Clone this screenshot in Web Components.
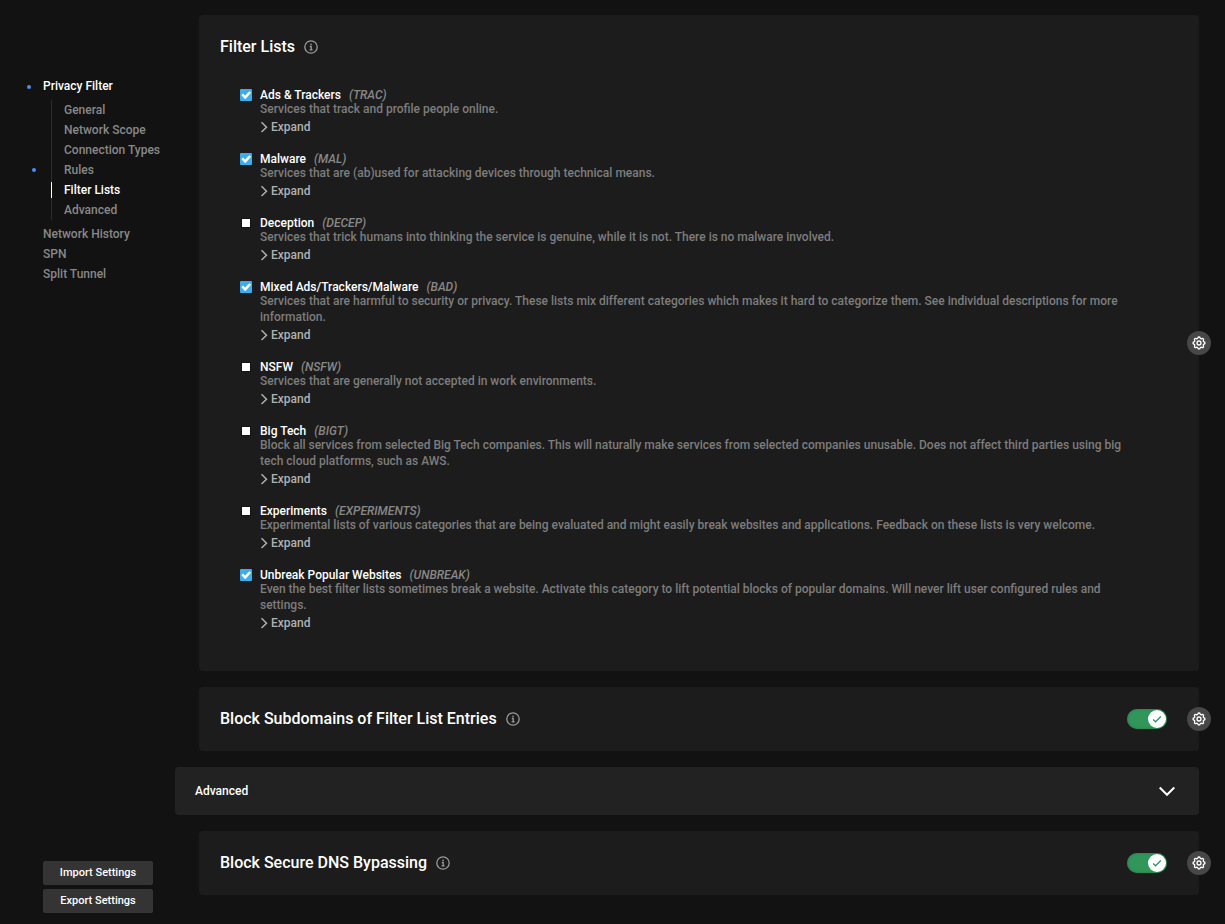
<!DOCTYPE html>
<html lang="en">
<head>
<meta charset="utf-8">
<title>Settings</title>
<style>
  html { background: #121212; }
  body { margin: 0; background: #121212; color: #fff; font: 500 12px/16px Roboto, sans-serif; }
</style>
</head>
<body>
<settings-page>
  <settings-nav slot="nav"></settings-nav>
  <setting-card heading="Filter Lists">
    <filter-item name="Ads &amp; Trackers" code="TRAC" checked>Services that track and profile people online.</filter-item>
    <filter-item name="Malware" code="MAL" checked>Services that are (ab)used for attacking devices through technical means.</filter-item>
    <filter-item name="Deception" code="DECEP">Services that trick humans into thinking the service is genuine, while it is not. There is no malware involved.</filter-item>
    <filter-item name="Mixed Ads/Trackers/Malware" code="BAD" checked>Services that are harmful to security or privacy. These lists mix different categories which makes it hard to categorize them. See individual descriptions for more information.</filter-item>
    <filter-item name="NSFW" code="NSFW">Services that are generally not accepted in work environments.</filter-item>
    <filter-item name="Big Tech" code="BIGT">Block all services from selected Big Tech companies. This will naturally make services from selected companies unusable. Does not affect third parties using big tech cloud platforms, such as AWS.</filter-item>
    <filter-item name="Experiments" code="EXPERIMENTS">Experimental lists of various categories that are being evaluated and might easily break websites and applications. Feedback on these lists is very welcome.</filter-item>
    <filter-item name="Unbreak Popular Websites" code="UNBREAK" checked>Even the best filter lists sometimes break a website. Activate this category to lift potential blocks of popular domains. Will never lift user configured rules and settings.</filter-item>
  </setting-card>
  <setting-card heading="Block Subdomains of Filter List Entries" toggle></setting-card>
  <section-bar>Advanced</section-bar>
  <setting-card heading="Block Secure DNS Bypassing" toggle></setting-card>
</settings-page>

<script>
const escapeText = s => s.replace(/&/g, '&amp;').replace(/</g, '&lt;').replace(/"/g, '&quot;');

class SettingsPage extends HTMLElement {
  constructor() {
    super();
    this.attachShadow({ mode: 'open' }).innerHTML = `
      <style>
        :host { display: grid; grid-template-columns: 175px minmax(0, 1fr); min-height: 100vh; }
        main { display: flex; flex-direction: column; gap: 16px; padding: 15px 26px 29px 0; }
      </style>
      <slot name="nav"></slot>
      <main><slot></slot></main>`;
  }
}

class SettingsNav extends HTMLElement {
  constructor() {
    super();
    this.attachShadow({ mode: 'open' }).innerHTML = `
      <style>
        :host { display: flex; flex-direction: column; justify-content: space-between; box-sizing: border-box;
                position: sticky; top: 0; height: 100vh; padding: 76px 0 11px 43px; }
        ul { list-style: none; margin: 0; padding: 0; }
        a { display: block; position: relative; line-height: 20px; color: #888; text-decoration: none; white-space: nowrap; }
        a.on { color: #fff; }
        .sub { margin: 4px 0 4px 8px; border-left: 1px solid #2c2c2c; }
        .sub a { padding-left: 12px; }
        .sub a.on::after { content: ""; position: absolute; left: -1px; top: 2px; width: 1px; height: 16px; background: #fff; }
        .dot::before { content: ""; position: absolute; left: -16px; top: 9px; width: 4px; height: 4px; border-radius: 50%; background: #4a8fee; }
        .sub .dot::before { left: -20px; top: 8px; }
        .actions { display: flex; flex-direction: column; gap: 4px; width: 110px; }
        button { height: 24px; border: 0; border-radius: 2px; padding: 0; background: #343434; color: #fff;
                 font: 500 11px/16px Roboto, sans-serif; cursor: pointer; }
      </style>
      <nav>
        <ul>
          <li><a class="on dot" href="#privacy">Privacy Filter</a>
            <ul class="sub">
              <li><a href="#general">General</a></li>
              <li><a href="#scope">Network Scope</a></li>
              <li><a href="#types">Connection Types</a></li>
              <li><a class="dot" href="#rules">Rules</a></li>
              <li><a class="on" href="#lists">Filter Lists</a></li>
              <li><a href="#advanced">Advanced</a></li>
            </ul></li>
          <li><a href="#history">Network History</a></li>
          <li><a href="#spn">SPN</a></li>
          <li><a href="#split">Split Tunnel</a></li>
        </ul>
      </nav>
      <div class="actions">
        <button type="button">Import Settings</button>
        <button type="button">Export Settings</button>
      </div>`;
  }
}

class SettingCard extends HTMLElement {
  connectedCallback() {
    if (this.shadowRoot) return;
    const heading = escapeText(this.getAttribute('heading'));
    this.attachShadow({ mode: 'open' }).innerHTML = `
      <style>
        :host { display: block; position: relative; margin-left: 24px; border-radius: 4px; background: #1c1c1c; }
        header { display: flex; align-items: center; height: 64px; padding: 0 32px 0 21px; }
        h2 { margin: 0; font-size: 16px; font-weight: 500; line-height: 24px; }
        .info { display: block; margin: 0 auto 0 9px; width: 14px; height: 14px; }
        .list { display: flex; flex-direction: column; gap: 16px; padding: 8px 60px 40px 40px; }
        .gear { position: absolute; right: -12px; top: calc(50% - 12px); width: 24px; height: 24px; padding: 0; border: 0;
                border-radius: 50%; background: #474747; cursor: pointer; }
        .gear svg { display: block; margin: auto; }
      </style>
      <header>
        <h2>${heading}</h2>
        <svg class="info" viewBox="0 0 14 14" fill="none" stroke="#9a9a9a" stroke-width="1.3" aria-hidden="true">
          <circle cx="7" cy="7" r="6.2"/><path d="M5.8 6.5h1.4v3.3M5.6 9.8h3"/><circle cx="7" cy="4.4" r=".8" fill="#9a9a9a" stroke="none"/></svg>
        ${this.hasAttribute('toggle') ? `<toggle-switch label="${heading}"></toggle-switch>` : ''}
      </header>
      ${this.children.length ? '<div class="list"><slot></slot></div>' : ''}
      <button class="gear" type="button" aria-label="Options for ${heading}">
        <svg width="16" height="16" viewBox="0 0 24 24" fill="none" stroke="#fff" stroke-width="2" stroke-linecap="round" stroke-linejoin="round">
          <path d="M10.325 4.317c.426-1.756 2.924-1.756 3.35 0a1.724 1.724 0 002.573 1.066c1.543-.94 3.31.826 2.37 2.37a1.724 1.724 0 001.065 2.572c1.756.426 1.756 2.924 0 3.35a1.724 1.724 0 00-1.066 2.573c.94 1.543-.826 3.31-2.37 2.37a1.724 1.724 0 00-2.572 1.065c-.426 1.756-2.924 1.756-3.35 0a1.724 1.724 0 00-2.573-1.066c-1.543.94-3.31-.826-2.37-2.37a1.724 1.724 0 00-1.065-2.572c-1.756-.426-1.756-2.924 0-3.35a1.724 1.724 0 001.066-2.573c-.94-1.543.826-3.31 2.37-2.37.996.608 2.296.07 2.572-1.065z"/>
          <circle cx="12" cy="12" r="3"/></svg>
      </button>`;
  }
}

class FilterItem extends HTMLElement {
  connectedCallback() {
    if (this.shadowRoot) return;
    this.attachShadow({ mode: 'open' }).innerHTML = `
      <style>
        :host { display: block; }
        label { display: flex; align-items: center; height: 14px; line-height: 16px; padding-top: 1px; margin-bottom: -1px; }
        .box { display: grid; width: 14px; height: 14px; margin: 0 7px 0 0; place-items: center; }
        .box > * { grid-area: 1 / 1; }
        input { appearance: none; margin: 0; width: 8px; height: 8px; background: #fff; outline: 1px solid #141414; }
        input:checked { width: 12px; height: 12px; border-radius: 1px; background: #3daee9; outline: 0; }
        .box svg { display: none; pointer-events: none; }
        input:checked + svg { display: block; }
        em { margin-left: 8px; color: #888; }
        p { margin: 0; padding-left: 21px; color: #7d7d7d; }
        button { display: flex; align-items: center; gap: 3px; margin: 2px 0 0 21px; padding: 0; border: 0; background: none;
                 color: #b0b0b0; font: inherit; cursor: pointer; }
      </style>
      <label><span class="box"><input type="checkbox" ${this.hasAttribute('checked') ? 'checked' : ''}>
        <svg width="12" height="12" viewBox="0 0 12 12" fill="none" stroke="#fff" stroke-width="2.4"><path d="M2.2 5.4l3 3L10.2 3"/></svg></span>
        <span>${escapeText(this.getAttribute('name'))}</span><em>(${this.getAttribute('code')})</em></label>
      <p><slot></slot></p>
      <button type="button"><svg width="8" height="12" viewBox="0 0 8 12" fill="none" stroke="currentColor" stroke-width="1.5"><path d="M1.5 1.3L6.5 6.2 1.5 11"/></svg>Expand</button>`;
  }
}

class ToggleSwitch extends HTMLElement {
  connectedCallback() {
    if (this.shadowRoot) return;
    this.attachShadow({ mode: 'open' }).innerHTML = `
      <style>
        :host { display: grid; width: 40px; height: 20px; }
        input, svg { grid-area: 1 / 1; }
        input { appearance: none; margin: 0; width: 40px; height: 20px; border-radius: 10px; background: #32965a;
                box-shadow: inset 0 0 3px #1f7a43; cursor: pointer; }
        svg { justify-self: end; margin: 1px; pointer-events: none; }
      </style>
      <input type="checkbox" role="switch" checked aria-label="${escapeText(this.getAttribute('label'))}">
      <svg width="18" height="18" viewBox="0 0 18 18"><circle cx="9" cy="9" r="9" fill="#fff"/>
        <path d="M5.2 9.5l2.4 2.3L12.8 6.5" fill="none" stroke="#32965a" stroke-width="1.3"/></svg>`;
  }
}

class SectionBar extends HTMLElement {
  constructor() {
    super();
    this.attachShadow({ mode: 'open' }).innerHTML = `
      <style>
        :host { display: block; }
        button { display: flex; align-items: center; justify-content: space-between; width: 100%; height: 48px;
                 padding: 0 24px 0 20px; border: 0; border-radius: 4px; background: #222; color: #fff; font: inherit; cursor: pointer; }
      </style>
      <button type="button" aria-expanded="true"><span><slot></slot></span>
        <svg width="16" height="10" viewBox="0 0 16 10" fill="none" stroke="#fff" stroke-width="2"><path d="M.7 1.5L8 8.8 15.3 1.5"/></svg></button>`;
  }
}

customElements.define('toggle-switch', ToggleSwitch);
customElements.define('filter-item', FilterItem);
customElements.define('setting-card', SettingCard);
customElements.define('section-bar', SectionBar);
customElements.define('settings-nav', SettingsNav);
customElements.define('settings-page', SettingsPage);
</script>
</body>
</html>
